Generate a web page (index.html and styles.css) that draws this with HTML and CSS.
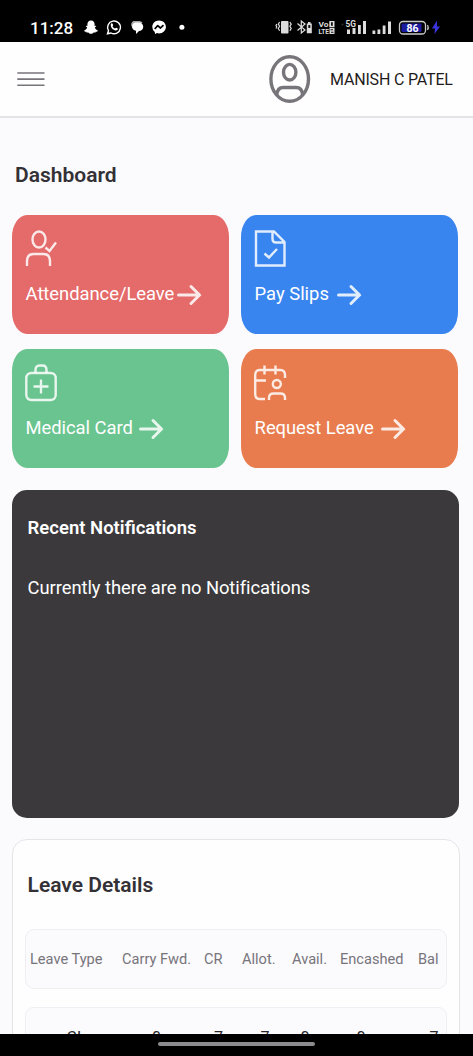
FILE: index.html
```html
<!DOCTYPE html>
<html lang="en">
<head>
<meta charset="utf-8">
<title>Dashboard</title>
<link rel="stylesheet" href="styles.css">
</head>
<body>
<div class="screen">
  <div class="statusbar">
    <span class="clock">11:28</span>
    <svg class="apps" width="110" height="20" viewBox="0 0 110 20">
      <path fill="#fff" d="M8 3.600c2.600 0 3.600 1.900 3.600 3.800v1.500l1.400-.2c.5.5-.2 1.100-1.200 1.500.3 1.500 1.600 2.800 3 3.200.2.8-.8 1.100-2.100 1.300l-.4 1c-1.500-.3-2 .2-2.700.7-1 .6-2.200.6-3.200 0-.7-.5-1.200-1-2.700-.7l-.4-1c-1.300-.2-2.300-.5-2.100-1.300 1.400-.4 2.700-1.700 3-3.200-1-.4-1.700-1-1.200-1.500l1.400.2V7.400C4.400 5.500 5.400 3.600 8 3.600z"/>
      <path fill="none" stroke="#fff" stroke-width="1.400" d="M24.500 16.800l1-3.200a6.400 6.400 0 1 1 2.500 2.400z"/>
      <path fill="#fff" d="M27.800 7c.6-1 1.500-1 1.900 0l.5 1.200-.7 1c.6 1.200 1.400 1.900 2.600 2.400l1-.9 1.700.8c.3 1-.8 2-2 2-2.800-.2-5.500-3.200-5-6.500z"/>
      <path fill="#aaa" d="M50.500 4h6a4 4 0 0 1 3 1.500l-8 6.500a4.300 4.300 0 0 1-1-8z"/>
      <path fill="#fff" d="M52.500 5.500h3.500a4.200 4.200 0 0 1 0 8.500l-3 3v-3.200a4.200 4.200 0 0 1-.5-8.300z"/>
      <path fill="#fff" d="M76 3.600c4 0 6.900 2.800 6.900 6.400s-3 6.400-6.900 6.400l-2-.3-2 1-.2-2.100A6.300 6.300 0 0 1 69.300 10c0-3.600 3-6.400 6.700-6.400z"/>
      <path fill="none" stroke="#000" stroke-width="1.700" stroke-linejoin="round" d="M71.700 12l3-3.400 2.800 2.400 3-2.800"/>
      <circle cx="98.900" cy="10.300" r="2.500" fill="#fff"/>
    </svg>
    <svg class="signals" width="170" height="22" viewBox="0 0 170 22">
      <g fill="none" stroke="#ddd" stroke-width="1.200">
        <path d="M4.600 6l-1.300 2.200 1.300 2-1.300 2.300 1.300 2.300M1.800 8l-.8 1.500.8 1.500-.8 1.500M14.900 6l1.300 2.200-1.300 2 1.300 2.300-1.300 2.300"/>
        <path d="M22.500 7.500l7.500 6.500-3.700 3V5l3.700 3-7.500 6.500"/>
      </g>
      <rect x="6" y="5" width="7.500" height="12.500" rx="1" fill="#ddd"/>
      <path fill="#ddd" d="M33 7.500V6h2.500v1.500h1.300v9.700h-5V7.500z"/>
      <path fill="#111" d="M33.300 9h2v3h-2z"/>
      <g class="volte"><text x="43.500" y="11" textLength="10" lengthAdjust="spacingAndGlyphs">Vo</text><text x="43.500" y="18.300" textLength="10.500" lengthAdjust="spacingAndGlyphs">LTE</text></g>
      <path fill="#ddd" d="M54.300 5h5.200v6.200h-5.200zM54.500 12h5v6h-5z"/>
      <path fill="#111" d="M56 6.300h1.800v3.500H56zM55.500 13.300h2.500v1h-2.500zM56 15.700h2.500v1H56z"/>
      <circle cx="67.500" cy="8.500" r="1" fill="#333"/>
      <text class="fiveg" x="70.500" y="11" textLength="10.500" lengthAdjust="spacingAndGlyphs">5G</text>
      <path fill="#ddd" d="M72 13.500h3V18h-3zM77.500 12h3v6h-3zM83 9h2.800v9H83zM88 5h3v13h-3zM97.500 14.500h2.800V18h-2.800zM102.500 13.500h2.800V18h-2.800zM107.700 9.500h2.800V18h-2.800zM113 5.500h3V18h-3z"/>
      <rect x="124.500" y="5.500" width="26" height="12.500" rx="3.500" fill="#000" stroke="#ccc" stroke-width="1.300"/>
      <rect x="126.500" y="7.500" width="20" height="8.500" rx="1" fill="#1b1ba0"/>
      <path d="M152.500 9q1.500 2.500 0 5" stroke="#bbb" stroke-width="1.400" fill="none"/>
      <text class="charge" x="131.500" y="15.600" textLength="12" lengthAdjust="spacingAndGlyphs">86</text>
      <path fill="#3a34dc" d="M162 4.500l-5 8h3l-.5 5.500 5.500-7.500h-3z"/>
    </svg>
  </div>

  <header class="topbar">
    <svg width="28" height="16" viewBox="0 0 28 16" stroke="#77747b" stroke-width="1.600"><path d="M.3 2h27.200M.3 8.100h27.200M.3 14.200h27.200"/></svg>
    <div class="user">
      <svg width="42" height="50" viewBox="0 0 42 50" fill="none" stroke="#77757a" stroke-width="3.400">
        <ellipse cx="20.700" cy="25" rx="18.800" ry="22.300"/>
        <ellipse cx="20.700" cy="18.200" rx="6.200" ry="7.800"/>
        <path d="M7.800 41c.3-4.800 2.700-7.500 6.500-7.500h12.800c3.800 0 6.200 2.700 6.500 7.500"/>
      </svg>
      <span class="username">MANISH C PATEL</span>
    </div>
  </header>

  <main class="content">
    <h1 class="title">Dashboard</h1>
    <section class="tiles">
      <a class="tile red">
        <svg class="icon" width="36" height="38" viewBox="0 0 36 38"><ellipse cx="14" cy="9.500" rx="6.500" ry="8"/><path d="M2 36v-4.500c0-5 2.500-7.500 6.500-7.500h10c4 0 6.500 2.500 6.500 7.500V36M20.500 17.500l4 3.500 6.500-8.500"/></svg>
        <span class="label"><span class="t1">Attendance/Leave</span><svg class="arrow" width="25" height="22" viewBox="0 0 25 22"><path d="M1.500 11h21M14 2.500l8.500 8.500-8.500 8.500"/></svg></span>
      </a>
      <a class="tile blue">
        <svg class="icon" width="36" height="38" viewBox="0 0 36 38"><path d="M2 1.500h18l10.500 10.500V35.500H2zM18.500 1.500V9q0 3.500 3.500 3.500h8M10.500 23.500l4.500 4 8-8.500"/></svg>
        <span class="label"><span class="t2">Pay Slips</span><svg class="arrow" width="25" height="22" viewBox="0 0 25 22"><path d="M1.500 11h21M14 2.500l8.500 8.500-8.500 8.500"/></svg></span>
      </a>
      <a class="tile green">
        <svg class="icon" width="36" height="38" viewBox="0 0 36 38"><rect x="1.300" y="9" width="29.400" height="27" rx="5"/><path d="M10.500 9V6c0-3 1.500-4.500 4-4.500h3c2.500 0 4 1.500 4 4.500v3M16 15.500v14M8.500 22.500h15"/></svg>
        <span class="label"><span class="t3">Medical Card</span><svg class="arrow" width="25" height="22" viewBox="0 0 25 22"><path d="M1.500 11h21M14 2.500l8.500 8.500-8.500 8.500"/></svg></span>
      </a>
      <a class="tile orange">
        <svg class="icon" width="36" height="38" viewBox="0 0 36 38"><path d="M31 14v-3c0-3-1.500-5-4.500-5H5.500C2.500 6 1.200 8 1.200 11v19c0 3 1.300 5 4.300 5H11M10.500 1.500v9M21.500 1.500v9M1 16.500h11"/><circle cx="22.800" cy="20" r="4"/><path d="M15 36v-2c0-3 1.500-4.500 4.500-4.500H26.500c3 0 4.500 1.500 4.500 4.500v2"/></svg>
        <span class="label"><span class="t4">Request Leave</span><svg class="arrow" width="25" height="22" viewBox="0 0 25 22"><path d="M1.500 11h21M14 2.500l8.500 8.500-8.500 8.500"/></svg></span>
      </a>
    </section>

    <section class="notifications">
      <h2>Recent Notifications</h2>
      <p>Currently there are no Notifications</p>
    </section>

    <section class="leave">
      <h2>Leave Details</h2>
      <div class="row head">
        <span>Leave Type</span><span>Carry Fwd.</span><span>CR</span><span>Allot.</span><span>Avail.</span><span>Encashed</span><span>Bal</span>
      </div>
      <div class="row data">
        <span>CL</span><span>0</span><span>7</span><span>7</span><span>0</span><span>0</span><span>7</span>
      </div>
    </section>
  </main>
  <div class="navbar"><div class="pill"></div></div>
</div>
</body>
</html>
```
FILE: styles.css
```css
* { box-sizing: border-box; }
body { margin: 0; font-family: Roboto, "Liberation Sans", sans-serif; color: #333135; }
h1, h2, p { margin: 0; }
svg { display: block; flex: none; }
.screen { width: 473px; height: 1056px; display: flex; flex-direction: column; overflow: hidden; background: #fbfafd; }

.statusbar { height: 42px; flex: none; background: #000; display: flex; align-items: flex-start; padding: 17px 0 0 30px; }
.clock { width: 53px; font-size: 17px; line-height: 22px; font-weight: 500; color: #fff; white-space: nowrap; }
.signals { margin: -1px 0 0 82px; }
.volte text { font: 700 7.5px Roboto, sans-serif; fill: #ddd; }
.fiveg { font: 700 9px Roboto, sans-serif; fill: #ddd; }
.charge { font: 700 11px Roboto, sans-serif; fill: #fff; }

.topbar { height: 76px; flex: none; background: #fefefe; border-bottom: 2px solid #e3e2e5; display: flex; align-items: center; justify-content: space-between; padding: 0 20px 0 17px; }
.user { display: flex; align-items: center; gap: 19px; }
.username { width: 123px; font-size: 16px; letter-spacing: -.18px; white-space: nowrap; color: #1e1c20; padding-top: 1px; }

.content { flex: 1; min-height: 0; overflow: hidden; padding: 42px 14px 0 12px; }
.title { font-size: 21px; line-height: 30px; font-weight: 600; padding-left: 3px; }
.tiles { display: grid; grid-template-columns: 217px 217px; grid-auto-rows: 119px; gap: 15px 12px; margin-top: 25px; }
.tile { border-radius: 15px / 22px; padding: 15px 0 0 13px; color: #fff; display: flex; flex-direction: column; gap: 15px; }
.icon, .arrow { fill: none; stroke: #fff; stroke-opacity: .85; stroke-width: 2.4; }
.icon { margin-left: -.5px; }
.arrow { stroke-width: 3; stroke-linecap: round; margin-left: -.5px; }
.label { display: flex; align-items: center; height: 24px; padding-left: .6px; font-size: 18.4px; white-space: nowrap; }
.label span { padding-bottom: 3px; }
.t1 { width: 152px; letter-spacing: -.04px; }
.t2 { width: 83px; }
.t3 { width: 114px; letter-spacing: -.05px; }
.t4 { width: 127px; letter-spacing: -.04px; }
.red { background: #e56a6a; }
.blue { background: #3985f0; }
.green { background: #69c48f; }
.orange { background: #e87c4e; }

.notifications { width: 447px; height: 328px; margin-top: 22px; background: #3b393b; border-radius: 15px; color: #fff; padding: 25px 15.6px; }
.notifications h2 { font-size: 18.5px; line-height: 26px; font-weight: 600; }
.notifications p { font-size: 18.4px; letter-spacing: -.07px; line-height: 26px; margin-top: 34px; }

.leave { width: 448px; height: 300px; margin-top: 21px; background: #fefefe; border: 1px solid #e5e4e8; border-radius: 15px; padding: 30px 12px 0; }
.leave h2 { font-size: 21px; line-height: 30px; font-weight: 600; padding-left: 2.6px; }
.row { display: grid; width: 422px; height: 60px; align-items: center; background: #fbfafd; border: 1px solid #efeef2; border-radius: 9px; white-space: nowrap; }
.head { margin-top: 29px; padding-left: 4px; grid-template-columns: 92px 82px 38px 50px 48px 78px 29px; font-size: 14.6px; color: #77757b; }
.data { margin-top: 18px; padding-left: 4px; height: 60px; grid-template-columns: 92px 69px 55px 38px 42px 70px 76px; text-align: center; font-size: 16px; color: #29272b; }
.navbar { height: 22px; flex: none; background: #000; display: flex; justify-content: center; padding-top: 8px; }
.pill { width: 157px; height: 4px; border-radius: 2px; background: #8c8b8d; }
```
